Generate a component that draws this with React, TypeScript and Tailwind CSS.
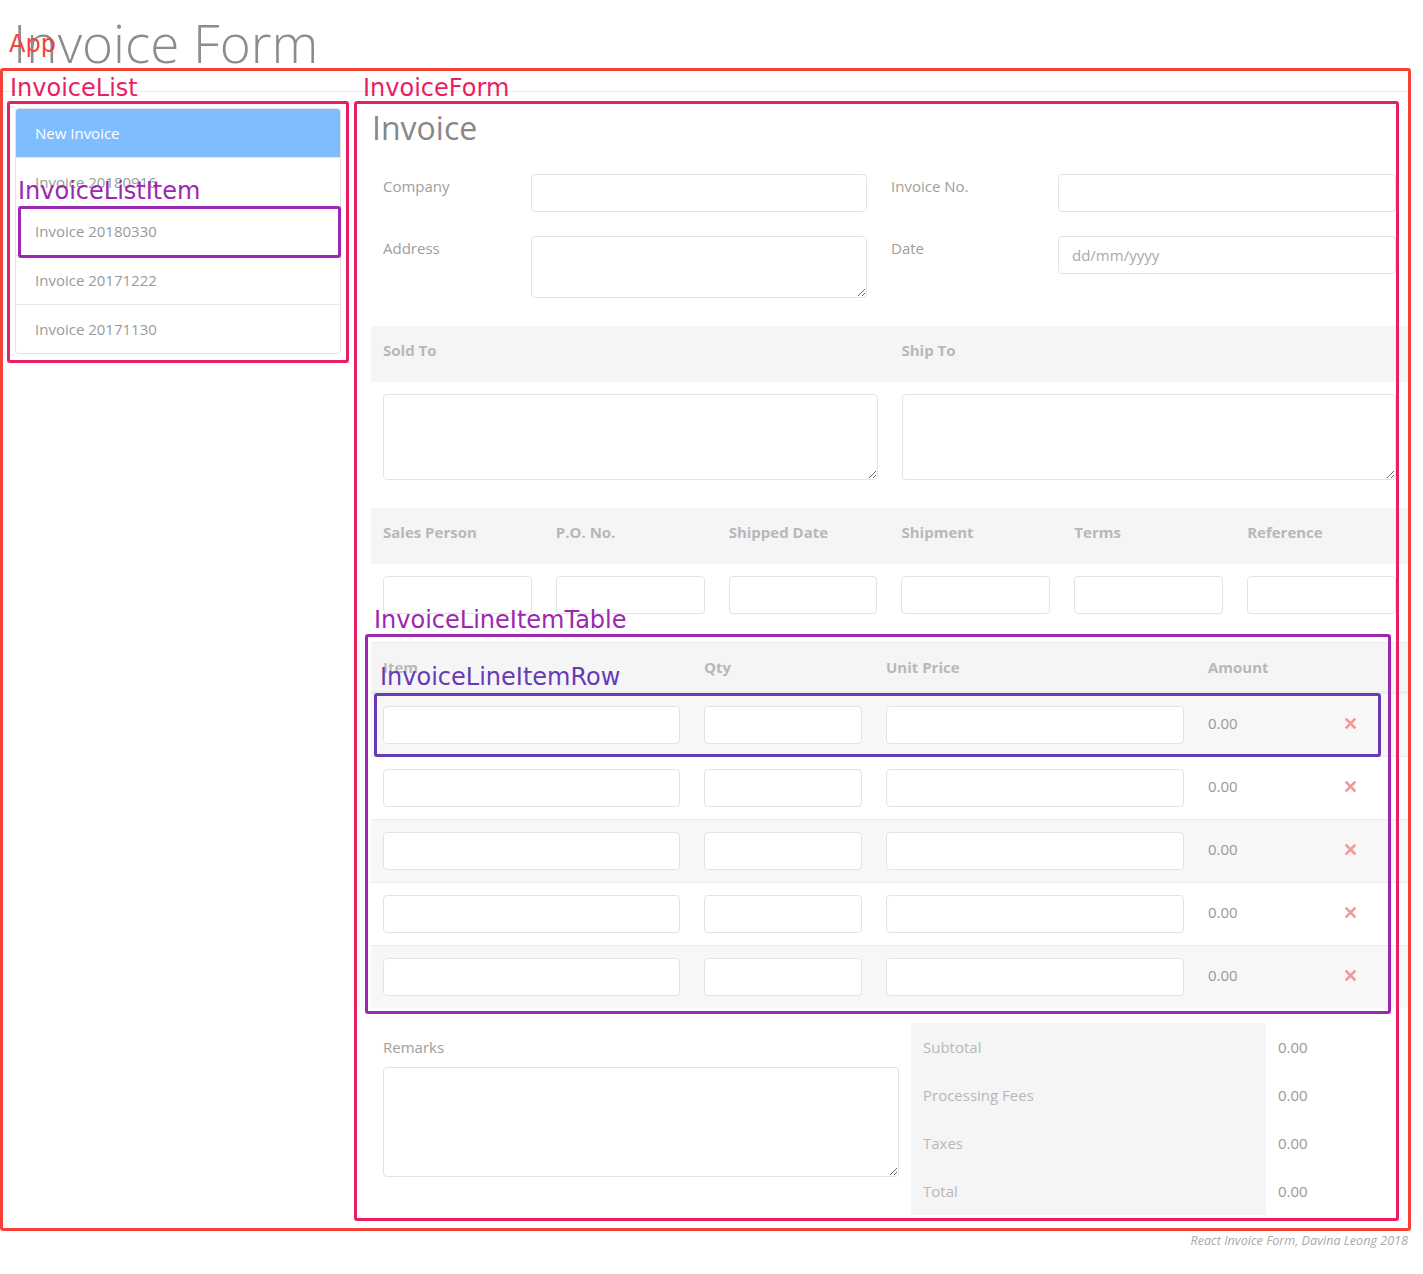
import React from 'react';

// debug label drawn over the component outlines
const label = "pointer-events-none absolute z-20 whitespace-nowrap font-['DejaVu_Sans',sans-serif] text-[24px] leading-[28px]";
const field = "block h-[38px] w-full rounded-[4px] border border-[#e3e3e3] bg-white px-[13px] text-[15px] text-[#666] outline-none placeholder:text-[#aaa]";
const area = "block w-full rounded-[4px] border border-[#e3e3e3] bg-white px-[12px] py-[6px] text-[15px] text-[#666] outline-none";
const band = "bg-[#f5f5f5] font-bold leading-[24px] text-[#b8b8b8]";

const invoices = ['Invoice 20180916', 'Invoice 20180330', 'Invoice 20171222', 'Invoice 20171130'];
const details = ['Sales Person', 'P.O. No.', 'Shipped Date', 'Shipment', 'Terms', 'Reference'];
const totals = ['Subtotal', 'Processing Fees', 'Taxes', 'Total'];

const RemoveIcon = () => (
  <svg width="11" height="11" viewBox="0 0 11 11" className="block">
    <path d="M1.5 1.5 L9.5 9.5 M9.5 1.5 L1.5 9.5" stroke="#ef9a9a" strokeWidth="2.6" strokeLinecap="square" />
  </svg>
);

const InvoiceList: React.FC = () => (
  <div className="relative ml-[4px] w-[342px] shrink-0 self-start rounded-[3px] border-[3px] border-[#e91e63] px-[5px] pt-[4px] pb-[6px]">
    <div className={`${label} -top-[30px] left-0 text-[#e91e63]`}>InvoiceList</div>
    <div className="rounded-[4px] border border-[#e2e2e2]">
      <div className="flex h-[48px] items-center rounded-t-[3px] bg-[#80bdff] px-[19px] leading-[24px] text-white">
        New Invoice
      </div>
      {invoices.map((name, i) => (
        <div key={name} className="relative flex h-[49px] items-center border-t border-[#e8e8e8] px-[19px] leading-[24px] text-[#9a9a9a]">
          {name}
          {i === 1 && (
            <>
              <div className="pointer-events-none absolute -top-[1px] left-[2px] -right-[1px] -bottom-[3px] z-10 rounded-[3px] border-[3px] border-[#9c27b0]" />
              <div className={`${label} -top-[30px] left-[2px] text-[#9c27b0]`}>InvoiceListItem</div>
            </>
          )}
        </div>
      ))}
    </div>
  </div>
);

const LineItemRow: React.FC<{ index: number }> = ({ index }) => (
  <div className={`relative flex items-center border-t border-[#ececec] ${index % 2 === 0 ? 'bg-[#f7f7f7]' : 'bg-white'}`}>
    <div className="w-[321px] p-[12px]"><input className={field} /></div>
    <div className="w-[182px] p-[12px]"><input className={field} /></div>
    <div className="w-[322px] p-[12px]"><input className={field} /></div>
    <div className="w-[137px] px-[12px] pt-[10px] pb-[14px] leading-[24px] text-[#999]">0.00</div>
    <div className="flex-1 pt-[9px] pb-[13px] pl-[12px]"><RemoveIcon /></div>
    {index === 0 && (
      <>
        <div className="pointer-events-none absolute -top-[1px] left-[3px] right-[27px] -bottom-[1px] z-10 rounded-[3px] border-[3px] border-[#673ab7]" />
        <div className={`${label} -top-[31px] left-[9px] text-[#673ab7]`}>InvoiceLineItemRow</div>
      </>
    )}
  </div>
);

const InvoiceLineItemTable: React.FC = () => (
  <div className="relative mt-[16px]">
    <div className="pointer-events-none absolute -top-[8px] -left-[6px] right-[17px] -bottom-[6px] z-10 rounded-[3px] border-[3px] border-[#9c27b0]" />
    <div className={`${label} -top-[36px] left-[3px] text-[#9c27b0]`}>InvoiceLineItemTable</div>
    <div className={`flex border-t border-b-2 border-[#ececec] ${band}`}>
      <div className="w-[321px] px-[12px] pt-[12px] pb-[12px]">Item</div>
      <div className="w-[182px] px-[12px] pt-[12px] pb-[12px]">Qty</div>
      <div className="w-[322px] px-[12px] pt-[12px] pb-[12px]">Unit Price</div>
      <div className="w-[137px] px-[12px] pt-[12px] pb-[12px]">Amount</div>
      <div className="flex-1" />
    </div>
    {[0, 1, 2, 3, 4].map((i) => (
      <LineItemRow key={i} index={i} />
    ))}
  </div>
);

const InvoiceForm: React.FC = () => (
  <div className="relative ml-[5px] w-[1045px] shrink-0 border-[3px] border-transparent pt-[4px] pb-[3px] pl-[14px]">
    <div className="pointer-events-none absolute -inset-[3px] z-10 rounded-[3px] border-[3px] border-[#e91e63]" />
    <div className={`${label} -top-[30px] left-[6px] text-[#e91e63]`}>InvoiceForm</div>
    <div className="w-[1037px]">
      <h2 className="pl-[1px] text-[32px] font-medium leading-[40px] text-[#888]">Invoice</h2>

      <div className="mt-[26px] grid grid-cols-[508px_529px] items-start gap-y-[24px] leading-[24px] text-[#9e9e9e]">
        <div className="flex px-[12px]">
          <div className="w-[148px] shrink-0">Company</div>
          <input className={field} />
        </div>
        <div className="flex px-[12px]">
          <div className="w-[167px] shrink-0">Invoice No.</div>
          <input className={field} />
        </div>
        <div className="flex px-[12px]">
          <div className="w-[148px] shrink-0">Address</div>
          <textarea className={`${area} h-[62px]`} />
        </div>
        <div className="flex px-[12px]">
          <div className="w-[167px] shrink-0">Date</div>
          <input className={field} placeholder="dd/mm/yyyy" />
        </div>
      </div>

      <div className={`mt-[28px] grid grid-cols-2 ${band}`}>
        <div className="px-[12px] pt-[12px] pb-[20px]">Sold To</div>
        <div className="px-[12px] pt-[12px] pb-[20px]">Ship To</div>
      </div>
      <div className="grid grid-cols-2">
        <div className="p-[12px]"><textarea className={`${area} h-[86px]`} /></div>
        <div className="p-[12px]"><textarea className={`${area} h-[86px]`} /></div>
      </div>

      <div className={`mt-[16px] grid grid-cols-6 ${band}`}>
        {details.map((d) => (
          <div key={d} className="px-[12px] pt-[12px] pb-[20px]">{d}</div>
        ))}
      </div>
      <div className="grid grid-cols-6">
        {details.map((d) => (
          <div key={d} className="p-[12px]"><input className={field} /></div>
        ))}
      </div>

      <InvoiceLineItemTable />

      <div className="mt-[15px] flex leading-[24px]">
        <div className="w-[540px] shrink-0 px-[12px] pt-[12px]">
          <div className="text-[#9e9e9e]">Remarks</div>
          <textarea className={`${area} mt-[8px] h-[110px] w-[515px]`} />
        </div>
        <div className="grid flex-1 grid-cols-[355px_1fr]">
          {totals.map((t) => (
            <React.Fragment key={t}>
              <div className="bg-[#f5f5f5] p-[12px] text-[#b8b8b8]">{t}</div>
              <div className="p-[12px] text-[#999]">0.00</div>
            </React.Fragment>
          ))}
        </div>
      </div>
    </div>
  </div>
);

export default function App() {
  return (
    <div className="w-[1423px] bg-white font-['Open_Sans',sans-serif] text-[15px] text-[#666]">
      <h1 className="mt-[17px] pl-[13px] text-[53px] font-light leading-[51px] text-[#8c8c8c]">Invoice Form</h1>

      <div className="relative w-[1411px] rounded-[3px] border-[3px] border-[#f44336] pb-[7px]">
        <div className={`${label} -top-[41px] left-[6px] text-[#f44336]`}>App</div>
        <div className="mt-[20px] h-px bg-[#eeeeee]" />
        <div className="mt-[9px] flex items-start">
          <InvoiceList />
          <InvoiceForm />
        </div>
      </div>

      <div className="mt-[2px] pr-[15px] text-right text-[12.6px] italic leading-[16px] text-[#aaa]">
        React Invoice Form, Davina Leong 2018
      </div>
    </div>
  );
}
